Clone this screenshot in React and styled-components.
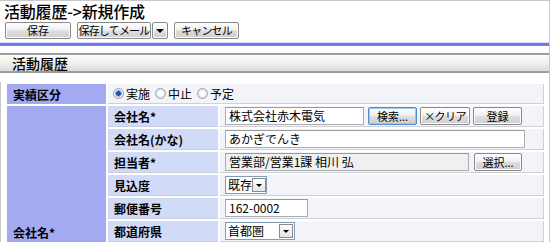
import styled, { createGlobalStyle } from "styled-components";

const GlobalStyle = createGlobalStyle`
  html, body {
    margin: 0;
    padding: 0;
    background: #ffffff;
    font-family: "Noto Sans CJK JP", "Liberation Sans", sans-serif;
    font-size: 12px;
    color: #000;
  }
`;

const Page = styled.div`
  width: 550px;
  height: 242px;
  border-top: 1px solid #c8c8c8;
  border-right: 1px solid #c8c8c8;
  box-sizing: border-box;
  overflow: hidden;
`;

const Title = styled.h1`
  margin: 0;
  padding: 0 0 0 4px;
  height: 20px;
  line-height: 20px;
  font-size: 16px;
  font-weight: 500;
  letter-spacing: -0.2px;
  white-space: nowrap;
`;

const Toolbar = styled.div`
  display: flex;
  align-items: center;
  gap: 6px;
  padding: 1px 0 0 5px;
  height: 17px;
`;

const Button = styled.button`
  box-sizing: border-box;
  height: ${(p) => p.$h || 17}px;
  width: ${(p) => p.$w}px;
  padding: 0;
  font-family: inherit;
  font-size: 11px;
  letter-spacing: ${(p) => p.$ls || 0}px;
  white-space: nowrap;
  line-height: 1;
  color: #000;
  border: 1px solid ${(p) => (p.$focus ? "#4b8fd0" : "#8a8a8a")};
  border-radius: 2px;
  background: linear-gradient(#ffffff, #f0f0f0 45%, #dcdcdc 55%, #cfcfcf);
  box-shadow: ${(p) => (p.$focus ? "inset 0 0 0 1px #9cc7ef" : "inset 0 0 0 1px #fbfbfb")};
  display: flex;
  align-items: center;
  justify-content: center;
  overflow: visible;
`;

const Split = styled.div`
  display: flex;
  gap: 1px;
`;

const Triangle = styled.span`
  width: 0;
  height: 0;
  border-left: ${(p) => p.$s}px solid transparent;
  border-right: ${(p) => p.$s}px solid transparent;
  border-top: ${(p) => p.$s}px solid #000;
`;

const BlueRule = styled.div`
  margin-top: 3px;
  height: 3px;
  background: #6b7ce2;
  border-top: 1px solid #d4d8f4;
`;

const SectionBar = styled.div`
  margin-top: 7px;
  height: 20px;
  box-sizing: border-box;
  border-top: 2px solid #9c9c9c;
  border-bottom: 2px solid #9c9c9c;
  background: linear-gradient(#fdfcf8, #f4f3ef 40%, #dcdcdc);
  padding-left: 12px;
  font-size: 14px;
  font-weight: 500;
  line-height: 16px;
`;

const Panel = styled.div`
  margin-top: 9px;
  border-left: 1px solid #c8c8c8;
  padding-left: 4px;
`;

const Table = styled.table`
  border-collapse: separate;
  border-spacing: 2px;
  width: 541px;
  table-layout: fixed;
`;

const Head = styled.th`
  background: ${(p) => (p.$inner ? "#d1daf7" : "#a4aaf2")};
  text-align: left;
  font-weight: bold;
  font-size: 12px;
  white-space: nowrap;
  padding: ${(p) => (p.$bottom ? "0 0 1px 6px" : "0 0 0 6px")};
  vertical-align: ${(p) => (p.$bottom ? "bottom" : "middle")};
  height: ${(p) => p.$h || 21}px;
  border-bottom: ${(p) => (p.$inner ? "1px solid #c9cde0" : "none")};
  box-sizing: border-box;
`;

const Cell = styled.td`
  background: #f3f4f9;
  border-right: 1px solid #cfcfd6;
  border-bottom: 1px solid #cfcfd6;
  padding: 0 0 0 5px;
  height: ${(p) => p.$h || 21}px;
  box-sizing: border-box;
`;

const Line = styled.div`
  display: flex;
  align-items: center;
  gap: ${(p) => p.$gap || 4}px;
`;

const Input = styled.div`
  box-sizing: border-box;
  width: ${(p) => p.$w}px;
  height: 18px;
  border: 1px solid #abadb3;
  border-top-color: #999;
  background: ${(p) => (p.$ro ? "#f0f0f0" : "#ffffff")};
  padding-left: 3px;
  line-height: 16px;
  font-size: 12px;
  white-space: nowrap;
  overflow: hidden;
`;

const Select = styled.div`
  box-sizing: border-box;
  width: ${(p) => p.$w}px;
  height: 18px;
  border: 1px solid #7f9db9;
  background: #fff;
  display: flex;
  align-items: center;
  justify-content: space-between;
  padding: 0 1px 0 2px;
  font-size: 12px;
  white-space: nowrap;
  line-height: 16px;
`;

const ArrowBox = styled.span`
  width: 14px;
  height: 14px;
  box-sizing: border-box;
  border: 1px solid #8a8a8a;
  background: linear-gradient(#ffffff, #e4e4e4);
  display: flex;
  align-items: center;
  justify-content: center;
  flex: none;
`;

const Radio = styled.span`
  display: inline-block;
  box-sizing: border-box;
  width: 11px;
  height: 11px;
  border-radius: 50%;
  border: 1px solid #a0a0a8;
  background: ${(p) =>
    p.$on
      ? "radial-gradient(circle, #1f50b0 0 2px, #7ea2e0 2.5px 3px, #eef0f6 3.5px)"
      : "radial-gradient(circle, #ffffff 0 2px, #e2e4ea 4px)"};
  margin-right: 2px;
`;

const RadioLabel = styled.span`
  display: inline-flex;
  align-items: center;
  margin-right: 1px;
  white-space: nowrap;
`;

const rows = [
  { label: "会社名*" },
  { label: "会社名(かな)" },
  { label: "担当者*" },
  { label: "見込度" },
  { label: "郵便番号" },
  { label: "都道府県" },
];

function Dropdown({ w, value }) {
  return (
    <Select $w={w}>
      <span>{value}</span>
      <ArrowBox>
        <Triangle $s={3} />
      </ArrowBox>
    </Select>
  );
}

export default function App() {
  return (
    <>
      <GlobalStyle />
      <Page>
        <Title>活動履歴-&gt;新規作成</Title>
        <Toolbar>
          <Button $w={66}>保存</Button>
          <Split>
            <Button $w={74} $ls={-0.8}>
              保存してメール
            </Button>
            <Button $w={16}>
              <Triangle $s={4} />
            </Button>
          </Split>
          <Button $w={65} $ls={-0.8}>
            キャンセル
          </Button>
        </Toolbar>
        <BlueRule />
        <SectionBar>活動履歴</SectionBar>
        <Panel>
          <Table>
            <colgroup>
              <col style={{ width: 99 }} />
              <col style={{ width: 110 }} />
              <col />
            </colgroup>
            <tbody>
              <tr>
                <Head $h={20}>実績区分</Head>
                <Cell colSpan={2} $h={20}>
                  <Line $gap={0}>
                    <RadioLabel>
                      <Radio $on />
                      実施
                    </RadioLabel>
                    <RadioLabel>
                      <Radio />
                      中止
                    </RadioLabel>
                    <RadioLabel>
                      <Radio />
                      予定
                    </RadioLabel>
                  </Line>
                </Cell>
              </tr>
              <tr>
                <Head rowSpan={rows.length} $bottom>
                  会社名*
                </Head>
                <Head $inner>{rows[0].label}</Head>
                <Cell>
                  <Line>
                    <Input $w={139}>株式会社赤木電気</Input>
                    <Line $gap={3}>
                      <Button $w={49} $h={18} $focus>
                        検索...
                      </Button>
                      <Button $w={50} $h={18} $ls={-0.6}>
                        ×クリア
                      </Button>
                      <Button $w={49} $h={18}>
                        登録
                      </Button>
                    </Line>
                  </Line>
                </Cell>
              </tr>
              <tr>
                <Head $inner>{rows[1].label}</Head>
                <Cell>
                  <Input $w={300}>あかぎでんき</Input>
                </Cell>
              </tr>
              <tr>
                <Head $inner>{rows[2].label}</Head>
                <Cell>
                  <Line $gap={5}>
                    <Input $w={244} $ro>
                      営業部/営業1課 相川 弘
                    </Input>
                    <Button $w={48} $h={18}>
                      選択...
                    </Button>
                  </Line>
                </Cell>
              </tr>
              <tr>
                <Head $inner>{rows[3].label}</Head>
                <Cell>
                  <Dropdown w={42} value="既存" />
                </Cell>
              </tr>
              <tr>
                <Head $inner>{rows[4].label}</Head>
                <Cell>
                  <Input $w={83}>162-0002</Input>
                </Cell>
              </tr>
              <tr>
                <Head $inner>{rows[5].label}</Head>
                <Cell>
                  <Dropdown w={70} value="首都圏" />
                </Cell>
              </tr>
            </tbody>
          </Table>
        </Panel>
      </Page>
    </>
  );
}
